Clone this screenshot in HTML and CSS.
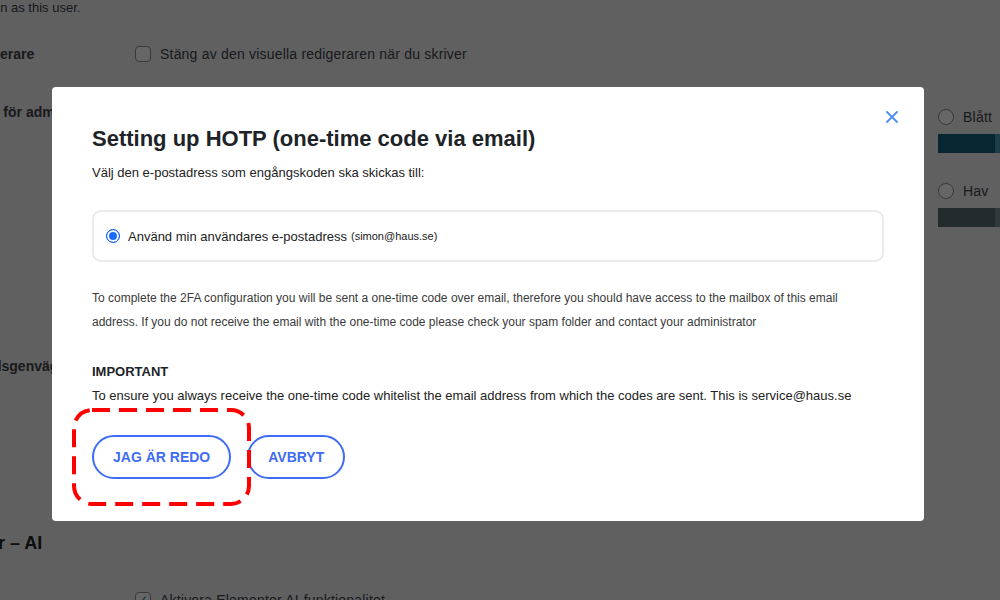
FILE: index.html
```html
<!DOCTYPE html>
<html lang="sv">
<head>
<meta charset="utf-8">
<title>HOTP</title>
<link rel="stylesheet" href="styles.css">
</head>
<body>
<div class="page">
  <p class="note">Log in as this user.</p>
  <div class="row row-editor">
    <div class="label">Visuell redigerare</div>
    <div class="field"><label class="check"><span class="box"></span>Stäng av den visuella redigeraren när du skriver</label></div>
  </div>
  <div class="row row-scheme">
    <div class="label">Färgschema för administration</div>
    <div class="field schemes">
      <div class="scheme"><div class="opt"><span class="radio"></span>Standard</div><div class="bar"><span style="background:#1d2327"></span><span style="background:#2c3338"></span><span style="background:#2271b1"></span><span style="background:#72aee6"></span></div></div>
      <div class="scheme"><div class="opt"><span class="radio"></span>Ljust</div><div class="bar"><span style="background:#e5e5e5"></span><span style="background:#999"></span><span style="background:#d64e07"></span><span style="background:#04a4cc"></span></div></div>
      <div class="scheme"><div class="opt"><span class="radio"></span>Modernt</div><div class="bar"><span style="background:#1e1e1e"></span><span style="background:#3858e9"></span><span style="background:#33f078"></span><span style="background:#fff"></span></div></div>
      <div class="scheme"><div class="opt"><span class="radio"></span>Blått</div><div class="bar"><span style="background:#135f7e"></span><span style="background:#4796b3"></span><span style="background:#52accc"></span><span style="background:#74b6ce"></span></div></div>
      <div class="scheme"><div class="opt"><span class="radio"></span>Kaffe</div><div class="bar"><span style="background:#46403c"></span><span style="background:#59524c"></span><span style="background:#c7a589"></span><span style="background:#9ea476"></span></div></div>
      <div class="scheme"><div class="opt"><span class="radio"></span>Ektoplasma</div><div class="bar"><span style="background:#413256"></span><span style="background:#523f6d"></span><span style="background:#a3b745"></span><span style="background:#d46f15"></span></div></div>
      <div class="scheme"><div class="opt"><span class="radio"></span>Midnatt</div><div class="bar"><span style="background:#25282b"></span><span style="background:#363b3f"></span><span style="background:#69a8bb"></span><span style="background:#e14d43"></span></div></div>
      <div class="scheme"><div class="opt"><span class="radio"></span>Hav</div><div class="bar"><span style="background:#586b72"></span><span style="background:#738e96"></span><span style="background:#9ebaa0"></span><span style="background:#aa9d88"></span></div></div>
    </div>
  </div>
  <div class="row row-keys">
    <div class="label">Tangentbordsgenvägar</div>
    <div class="field"><label class="check"><span class="box"></span>Aktivera tangentbordsgenvägar för moderering av kommentarer.</label></div>
  </div>
  <h2 class="section">Elementor – AI</h2>
  <div class="row row-ai">
    <div class="label">Status</div>
    <div class="field"><label class="check"><span class="box checked">✓</span>Aktivera Elementor AI-funktionalitet</label></div>
  </div>
</div>

<div class="overlay"></div>

<div class="modal">
  <button class="close" aria-label="Stäng">
    <svg width="12" height="12" viewBox="0 0 12 12"><path d="M1 1 L11 11 M11 1 L1 11" stroke="#4a8ef5" stroke-width="1.8" stroke-linecap="round"/></svg>
  </button>
  <h1 class="title">Setting up HOTP (one-time code via email)</h1>
  <p class="sub">Välj den e-postadress som engångskoden ska skickas till:</p>
  <label class="option"><span class="dot"></span>Använd min användares e-postadress <small>(simon@haus.se)</small></label>
  <p class="info">To complete the 2FA configuration you will be sent a one-time code over email, therefore you should have access to the mailbox of this email address. If you do not receive the email with the one-time code please check your spam folder and contact your administrator</p>
  <p class="imp-head">IMPORTANT</p>
  <p class="imp">To ensure you always receive the one-time code whitelist the email address from which the codes are sent. This is service@haus.se</p>
  <div class="actions">
    <svg class="mark" width="179" height="98" viewBox="0 0 179 98"><rect x="2" y="2" width="175" height="94" rx="18" ry="18" fill="none" stroke="#ff0000" stroke-width="4" stroke-dasharray="18 9"/></svg>
    <button class="btn">JAG ÄR REDO</button>
    <button class="btn">AVBRYT</button>
  </div>
</div>
</body>
</html>
```

FILE: styles.css
```css
* { box-sizing: border-box; }
html, body { margin: 0; padding: 0; }
body {
  width: 1000px;
  height: 600px;
  overflow: hidden;
  background: #f0f0f1;
  color: #3c434a;
  font-family: "Liberation Sans", Arial, sans-serif;
}
.page {
  margin-left: -83px;
  width: 1200px;
}
.note {
  margin: 0 0 0 55px;
  font-size: 13px;
  line-height: 16px;
}
.row {
  display: flex;
  align-items: flex-start;
}
.label {
  width: 218px;
  flex: none;
  font-weight: bold;
  font-size: 14px;
  line-height: 20px;
  white-space: nowrap;
}
.field {
  font-size: 14px;
  line-height: 20px;
  letter-spacing: 0.2px;
  white-space: nowrap;
}
.row-editor { margin-top: 28px; }
.row-scheme { margin-top: 38px; }
.row-keys { margin-top: 129px; }
.row-ai { margin-top: 35px; }
.check {
  display: flex;
  align-items: center;
  gap: 9px;
}
.box {
  width: 16px;
  height: 16px;
  border: 1px solid #8c8f94;
  border-radius: 4px;
  background: #fff;
  font-size: 12px;
  line-height: 14px;
  text-align: center;
  color: #2271b1;
}
.schemes {
  padding-top: 5px;
  display: grid;
  grid-template-columns: repeat(4, 267.7px);
  row-gap: 28px;
}
.opt {
  display: flex;
  align-items: center;
  gap: 9px;
  height: 20px;
}
.radio {
  width: 16px;
  height: 16px;
  border: 1px solid #8c8f94;
  border-radius: 50%;
  background: #fff;
}
.bar {
  margin-top: 7px;
  display: flex;
  height: 19px;
}
.bar span { width: 57px; }
.section {
  margin: 155px 0 0 0;
  font-size: 18px;
  line-height: 24px;
  font-weight: bold;
  color: #1d2327;
}
.overlay {
  position: fixed;
  inset: 0;
  background: rgba(0, 0, 0, 0.6);
}
.modal {
  position: fixed;
  left: 52px;
  top: 87px;
  width: 872px;
  padding: 38px 40px 42px;
  background: #fff;
  border-radius: 4px;
  color: #222;
}
.close {
  position: absolute;
  top: 24px;
  right: 26px;
  width: 12px;
  height: 12px;
  padding: 0;
  border: 0;
  background: none;
  display: flex;
}
.title {
  margin: 0;
  font-size: 22px;
  line-height: 28px;
  font-weight: bold;
  color: #1d2327;
}
.sub {
  margin: 10px 0 0;
  font-size: 13px;
  line-height: 20px;
  color: #222;
}
.option {
  margin-top: 27px;
  display: flex;
  align-items: center;
  gap: 8px;
  height: 52px;
  padding: 0 12px 0 12px;
  border: 2px solid #ebebeb;
  border-radius: 9px;
  font-size: 13px;
  color: #222;
}
.option small { font-size: 11px; margin-left: -4px; }
.dot {
  width: 14px;
  height: 14px;
  border-radius: 50%;
  border: 1.5px solid #0d5df5;
  background: #1a6cff;
  box-shadow: inset 0 0 0 2px #fff;
}
.info {
  margin: 24px 0 0;
  font-size: 12px;
  line-height: 24px;
  color: #3a3a3a;
}
.imp-head {
  margin: 26px 0 0;
  font-size: 13px;
  line-height: 24px;
  font-weight: bold;
  color: #1d2327;
}
.imp {
  margin: 0;
  font-size: 13px;
  line-height: 24px;
  color: #222;
}
.actions {
  position: relative;
  margin-top: 27px;
  display: flex;
  gap: 16px;
}
.mark {
  position: absolute;
  left: -20px;
  top: -27px;
}
.btn {
  height: 44px;
  padding: 0 19px;
  border: 2px solid #3f6cf5;
  border-radius: 22px;
  background: #fff;
  color: #3f6cf5;
  font-family: "Liberation Sans", Arial, sans-serif;
  font-size: 14px;
  font-weight: bold;
}
```
